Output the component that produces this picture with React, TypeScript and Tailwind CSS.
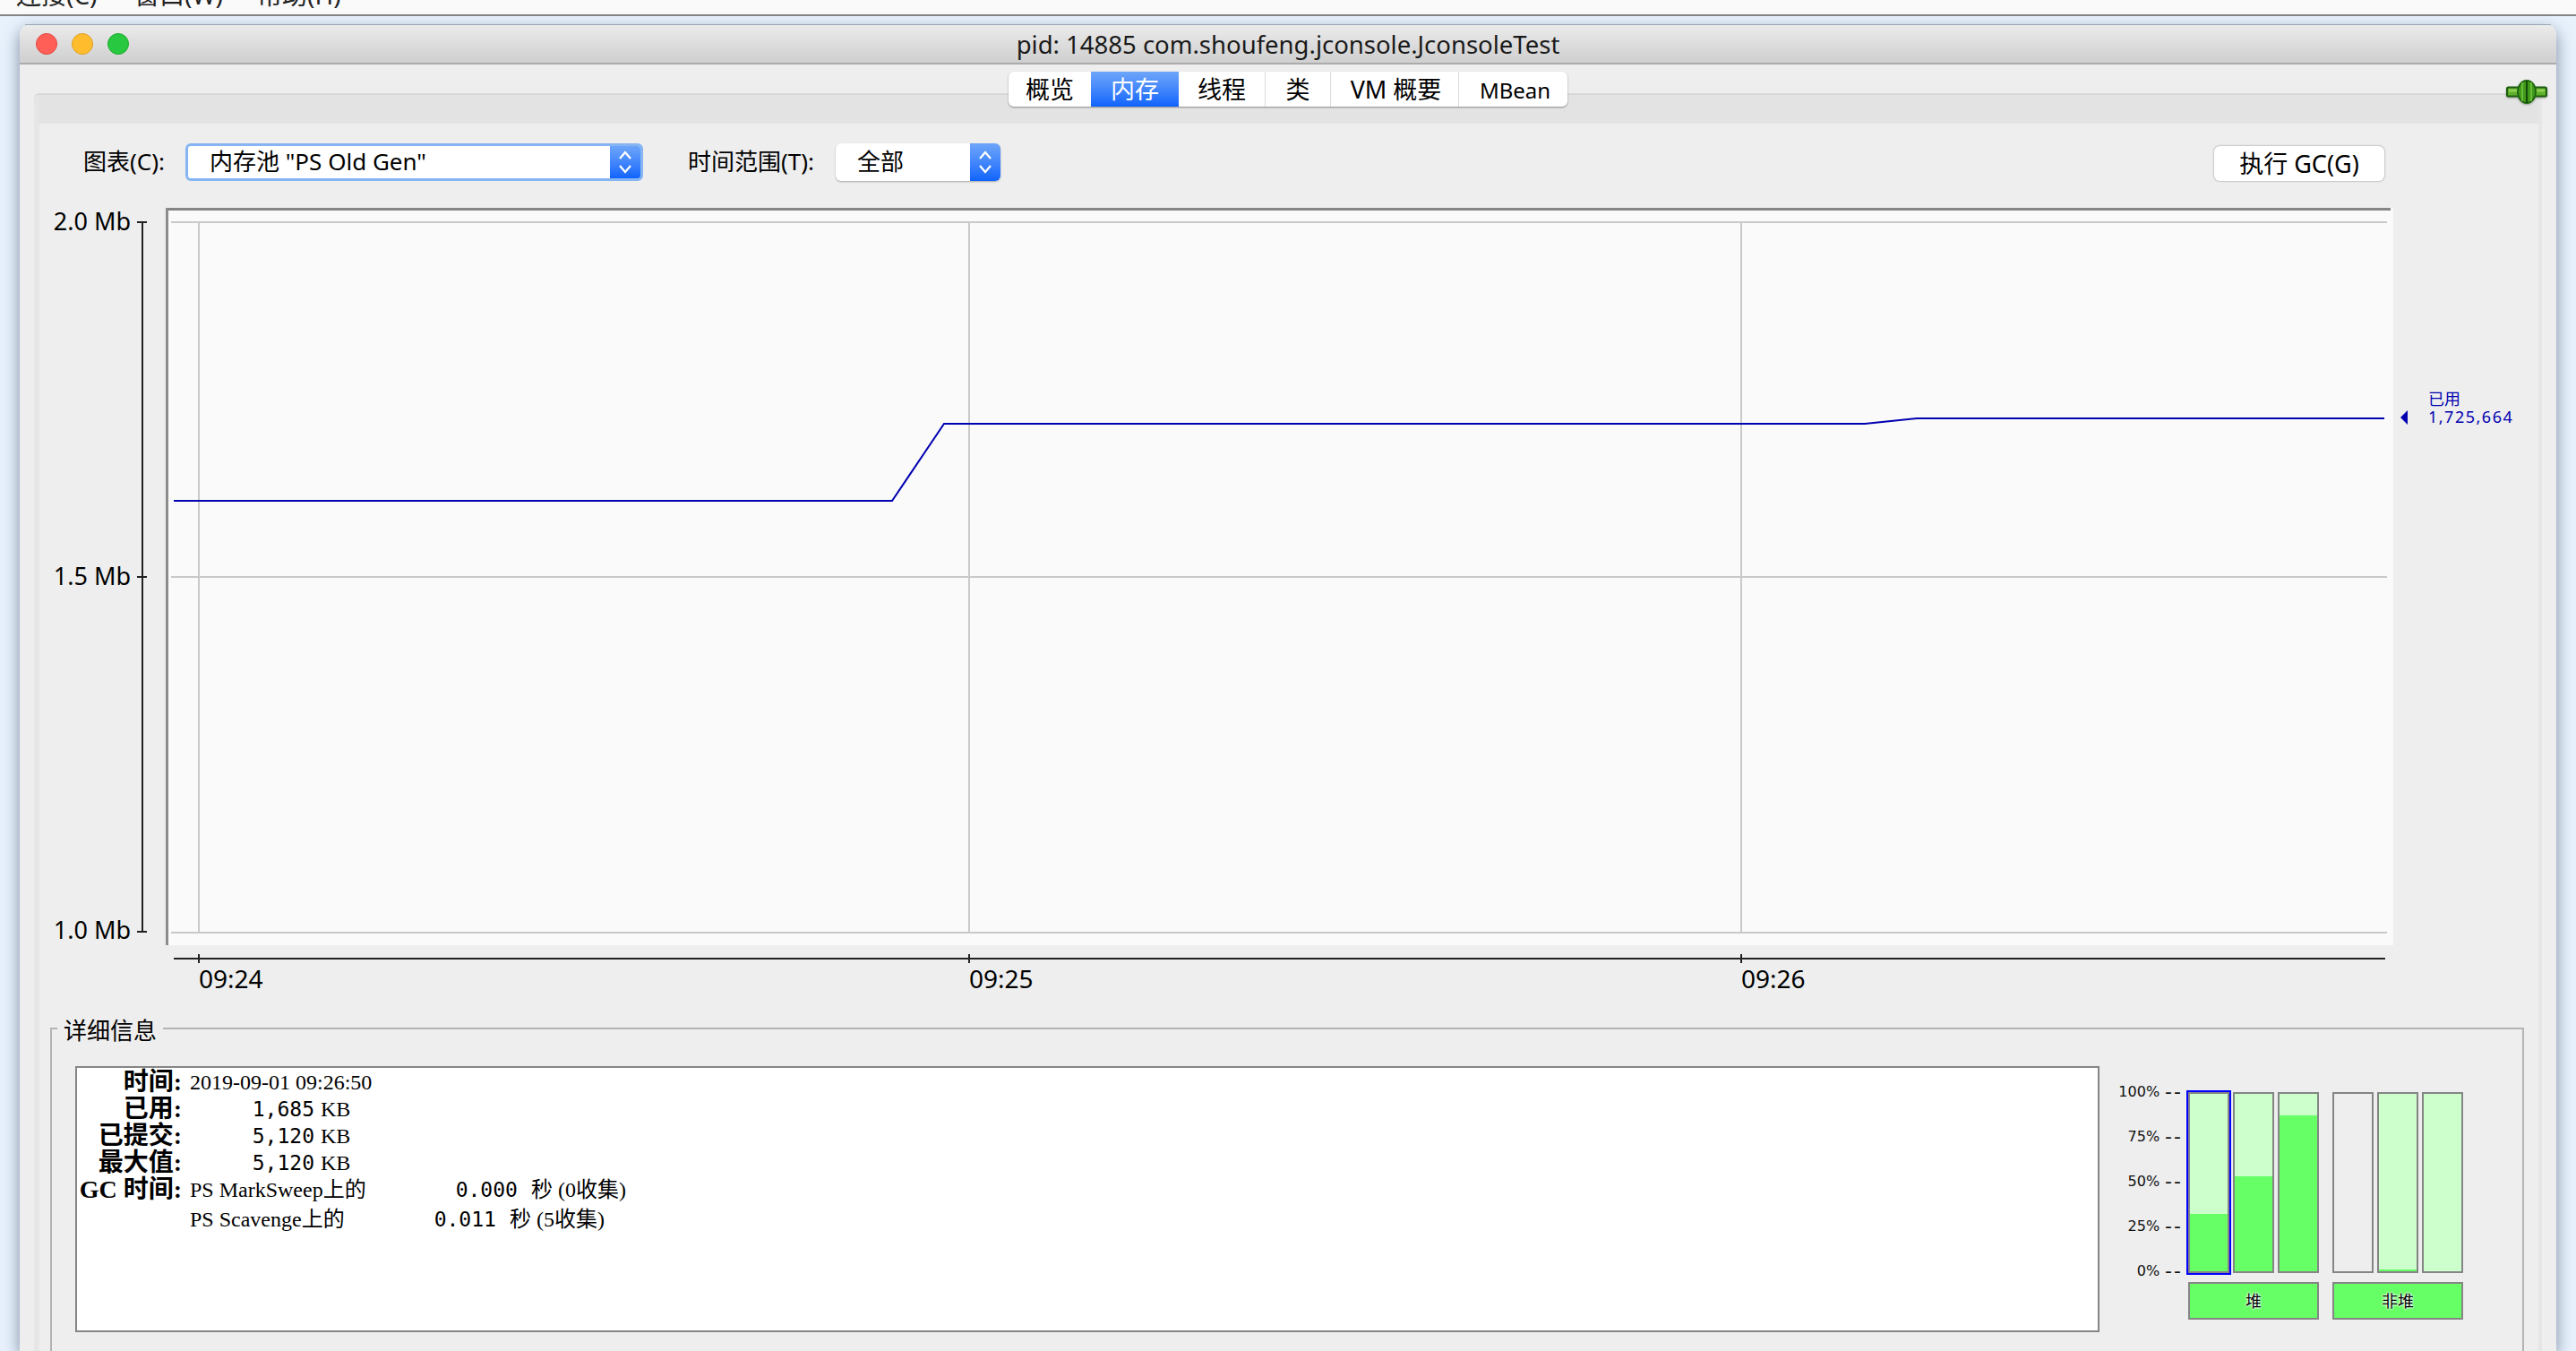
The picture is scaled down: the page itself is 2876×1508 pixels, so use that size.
import React from 'react';

const sans = 'font-["Noto_Sans","Noto_Sans_CJK_SC",sans-serif]';
const cjkSerif = 'font-["Liberation_Serif","Noto_Sans_CJK_SC",serif]';
const mono = 'font-["DejaVu_Sans_Mono",monospace]';

function Chevrons() {
  return (
    <svg width="18" height="30" viewBox="0 0 18 30" fill="none" stroke="#fff" strokeWidth="2.2">
      <path d="M3 11 L9 4 L15 11" />
      <path d="M3 19 L9 26 L15 19" />
    </svg>
  );
}

function Select({ label, className }: { label: string; className: string }) {
  return (
    <div className={`flex h-[42px] items-stretch overflow-hidden rounded-[6px] bg-white ${className}`}>
      <div className="flex flex-1 items-center pb-[2px] pl-[24px] text-[26px] text-black">{label}</div>
      <div className="flex w-[34px] items-center justify-center bg-gradient-to-b from-[#6ea5f9] to-[#0d63fd]">
        <Chevrons />
      </div>
    </div>
  );
}

function PlugIcon() {
  return (
    <svg width="46" height="27" viewBox="0 0 46 27">
      <rect x="1" y="8.5" width="44" height="10" rx="1.5" fill="#5fb02a" stroke="#1d5c10" strokeWidth="2" />
      <rect x="3" y="10.5" width="40" height="3" fill="#8fd055" />
      <ellipse cx="23" cy="13.5" rx="11" ry="13.5" fill="#3f9a1c" />
      <ellipse cx="23" cy="13.5" rx="10" ry="12.5" fill="none" stroke="#1d5c10" strokeWidth="1.5" />
      <path d="M23 1 V26" stroke="#144a0a" strokeWidth="2" />
      <path d="M18 3 V24 M28 3 V24" stroke="#79c840" strokeWidth="1.5" />
    </svg>
  );
}

function MemoryChart() {
  const hLines = [248, 644, 1041];
  const vLines = [222, 1082, 1944];
  const yLabels: [string, number][] = [['2.0 Mb', 247], ['1.5 Mb', 643], ['1.0 Mb', 1038]];
  const times = ['09:24', '09:25', '09:26'];
  return (
    <svg className={`block h-[904px] w-[2790px] ${sans}`} viewBox="44 232 2790 904">
      <rect x="185" y="232" width="2487" height="823" fill="#fafafa" />
      <rect x="185" y="232" width="2484" height="3" fill="#858585" />
      <rect x="185" y="232" width="3" height="823" fill="#8c8c8c" />
      {hLines.map((y) => (
        <line key={y} x1="191" x2="2665" y1={y} y2={y} stroke="#c9c9c9" strokeWidth="2" />
      ))}
      {vLines.map((x) => (
        <line key={x} x1={x} x2={x} y1="248" y2="1041" stroke="#c9c9c9" strokeWidth="2" />
      ))}
      <polyline
        points="194,559 996,559 1054,473 2082,473 2140,467 2662,467"
        fill="none"
        stroke="#0000b0"
        strokeWidth="2"
      />

      <line x1="159" x2="159" y1="248" y2="1040" stroke="#222" strokeWidth="2" />
      {[248, 644, 1040].map((y) => (
        <line key={y} x1="153" x2="164" y1={y} y2={y} stroke="#222" strokeWidth="2" />
      ))}
      {yLabels.map(([t, y]) => (
        <text key={t} x="146" y={y + 10} textAnchor="end" fontSize="27" fill="#000">
          {t}
        </text>
      ))}

      <line x1="194" x2="2663" y1="1070" y2="1070" stroke="#222" strokeWidth="2" />
      {vLines.map((x, i) => (
        <g key={x}>
          <line x1={x} x2={x} y1="1065" y2="1075" stroke="#222" strokeWidth="2" />
          <text x={x} y="1103" fontSize="28" fill="#000">
            {times[i]}
          </text>
        </g>
      ))}

      <path d="M2688 458 V474 L2680 466 Z" fill="#0000b0" />
      <text x="2711" y="452" fontSize="18" fill="#0000b0">已用</text>
      <text x="2711" y="472" fontSize="18" letterSpacing="1.5" fill="#0000b0">1,725,664</text>
    </svg>
  );
}

function DetailRow({ label, children, className = '' }: { label?: string; children: React.ReactNode; className?: string }) {
  return (
    <div className={`flex h-[30px] items-center ${className}`}>
      <div className="w-[117px] shrink-0 whitespace-nowrap text-right text-[28px] font-bold">{label}</div>
      <div className="ml-[9px] flex items-center whitespace-nowrap text-[24px]">{children}</div>
    </div>
  );
}

function Kb({ value }: { value: string }) {
  return (
    <>
      <span className={`w-[139px] text-right text-[23px] ${mono}`}>{value}</span>
      <span className="ml-[7px]">KB</span>
    </>
  );
}

function GcValue({ name, time, count }: { name: string; time: string; count: string }) {
  return (
    <>
      <span>{name}</span>
      <span className={`ml-[100px] text-[23px] ${mono}`}>{time}</span>
      <span className="ml-[15px]">秒</span>
      <span className="ml-[6px]">({count}收集)</span>
    </>
  );
}

function Bar({ fill, selected, empty }: { fill: string; selected?: boolean; empty?: boolean }) {
  return (
    <div
      className={`flex h-[202px] w-[46px] flex-col justify-end border-2 border-[#858585] ${empty ? 'bg-[#eeeeee]' : 'bg-[#ccffcc]'} ${selected ? 'outline-2 outline-[#0000ff]' : ''}`}
    >
      <div className="bg-[#66ff66]" style={{ height: fill }} />
    </div>
  );
}

function Group({ name, children, className = '' }: { name: string; children: React.ReactNode; className?: string }) {
  return (
    <div className={`w-[146px] ${className}`}>
      <div className="flex gap-[4px]">{children}</div>
      <div className="mt-[10px] flex h-[42px] items-center justify-center border-2 border-[#858585] bg-[#66ff66] text-[18px] text-black [text-shadow:0_0_2px_#fff,0_0_2px_#fff,0_0_3px_#fff]">
        {name}
      </div>
    </div>
  );
}

function Gauges() {
  const scale = ['100%', '75%', '50%', '25%', '0%'];
  return (
    <div className="mt-[1px] flex items-start">
      <div className={`mt-[3px] w-[97px] font-["DejaVu_Sans",sans-serif] text-[16px] text-[#111]`}>
        {scale.map((s) => (
          <div key={s} className="flex h-[50px] items-center justify-end pr-[4px]">
            {s}
            <span className="ml-[6px] text-[22px] leading-none tracking-[2px]">--</span>
          </div>
        ))}
      </div>
      <div className="ml-[2px] mt-[28px] flex">
        <Group name="堆">
          <Bar fill="64px" selected />
          <Bar fill="106px" />
          <Bar fill="174px" />
        </Group>
        <Group name="非堆" className="ml-[15px]">
          <Bar fill="0px" empty />
          <Bar fill="2px" />
          <Bar fill="0px" />
        </Group>
      </div>
    </div>
  );
}

export default function App() {
  const tabs: [string, string][] = [
    ['概览', 'w-[92px]'],
    ['内存', 'w-[98px] bg-gradient-to-b from-[#6ea5f9] to-[#0d63fd] text-white'],
    ['线程', 'w-[97px] border-r border-[#dcdcdc]'],
    ['类', 'w-[73px] border-r border-[#dcdcdc]'],
    ['VM 概要', 'w-[143px] border-r border-[#dcdcdc] pl-[3px]'],
    ['MBean', 'w-[121px] text-[24px] pl-[4px]'],
  ];

  return (
    <div className={`flex h-[1508px] w-[2876px] flex-col overflow-hidden bg-[#e8f2fd] text-black ${sans}`}>
      {/* Mac menu bar, cut off by the top of the screenshot */}
      <div className="h-[18px] shrink-0 overflow-hidden border-b-2 border-[#858585] bg-[#fafafa]">
        <div className="-mt-[24px] flex pl-[18px] text-[28px] leading-[36px] text-[#222]">
          <span className="w-[132px]">连接(C)</span>
          <span className="w-[137px]">窗口(W)</span>
          <span>帮助(H)</span>
        </div>
      </div>

      <div className="mt-[9px] ml-[28px] h-[1px] w-[2820px] shrink-0 bg-[#a9b7c4]" />

      <div className="ml-[22px] flex w-[2832px] flex-1 flex-col overflow-visible rounded-t-[10px] bg-[#eeeeee] shadow-[0_6px_18px_rgba(50,70,100,0.6)]">
        {/* Title bar */}
        <div className="grid h-[44px] shrink-0 grid-cols-[1fr_auto_1fr] items-center rounded-t-[10px] border-b-2 border-[#ababab] bg-gradient-to-b from-[#ebebeb] to-[#cfcfcf]">
          <div className="flex gap-[16px] pl-[18px]">
            <span className="h-[24px] w-[24px] rounded-full border border-[#e2463f] bg-[#ff5f57]" />
            <span className="h-[24px] w-[24px] rounded-full border border-[#dfa023] bg-[#ffbd2e]" />
            <span className="h-[24px] w-[24px] rounded-full border border-[#1aab29] bg-[#28c840]" />
          </div>
          <div className="pt-[2px] text-[27.5px] leading-none text-[#1a1a1a]">pid: 14885 com.shoufeng.jconsole.JconsoleTest</div>
          <div />
        </div>

        {/* Tabs */}
        <div className="relative z-10 flex shrink-0 justify-center pt-[8px]">
          <div className="flex h-[39px] overflow-hidden rounded-[6px] bg-white pt-0 text-[27px] shadow-[0_1px_2px_rgba(0,0,0,0.4)]">
            {tabs.map(([name, cls]) => (
              <div key={name} className={`flex items-center justify-center ${cls}`}>
                <span className="translate-y-[1px]">{name}</span>
              </div>
            ))}
          </div>
          <div className="absolute right-[10px] top-[17px] drop-shadow-[0_1px_1px_rgba(0,0,0,0.3)]">
            <PlugIcon />
          </div>
        </div>

        {/* Tab pane */}
        <div className="-mt-[15px] mx-[16px] flex flex-1 flex-col rounded-t-[6px] border-t-2 border-[#d8d8d8] bg-[#e6e6e6] pl-[6px] pr-[4px]">
          <div className="h-[32px] shrink-0 bg-[#e3e3e3]" />
          <div className="flex flex-1 flex-col bg-[#eeeeee]">
            <div className="flex h-[94px] shrink-0 items-start pl-[49px] pr-[172px] pt-[22px] text-[26px]">
              <span className="mt-[1px] w-[92px] whitespace-nowrap">图表(C):</span>
              <Select label={'内存池 "PS Old Gen"'} className="ml-[22px] w-[511px] border-[3px] border-[#85b5f2]" />
              <span className="ml-[50px] mt-[1px] w-[143px] whitespace-nowrap">时间范围(T):</span>
              <Select label="全部" className="ml-[22px] w-[184px] shadow-[0_1px_2px_rgba(0,0,0,0.3)]" />
              <button className="ml-auto mt-[3px] h-[39px] w-[190px] rounded-[6px] bg-white text-[27px] shadow-[0_0_2px_rgba(0,0,0,0.5)]">
                执行 GC(G)
              </button>
            </div>

            <MemoryChart />

            {/* Details */}
            <div className="relative ml-[12px] mr-[16px] mt-[11px] flex-1 border-x-2 border-t-2 border-[#b4b4b4] pl-[26px] pt-[41px]">
              <div className="absolute -top-[14px] left-[6px] bg-[#eeeeee] px-[7px] text-[26px] leading-[30px]">详细信息</div>
              <div className="flex items-start">
                <div className={`h-[297px] w-[2260px] shrink-0 border-2 border-[#858585] bg-white pt-[1px] ${cjkSerif}`}>
                  <DetailRow label="时间:">2019-09-01 09:26:50</DetailRow>
                  <DetailRow label="已用:"><Kb value="1,685" /></DetailRow>
                  <DetailRow label="已提交:"><Kb value="5,120" /></DetailRow>
                  <DetailRow label="最大值:"><Kb value="5,120" /></DetailRow>
                  <DetailRow label="GC 时间:"><GcValue name="PS MarkSweep上的" time="0.000" count="0" /></DetailRow>
                  <DetailRow className="mt-[3px]"><GcValue name="PS Scavenge上的" time="0.011" count="5" /></DetailRow>
                </div>
                <Gauges />
              </div>
            </div>
          </div>
        </div>
      </div>
    </div>
  );
}
